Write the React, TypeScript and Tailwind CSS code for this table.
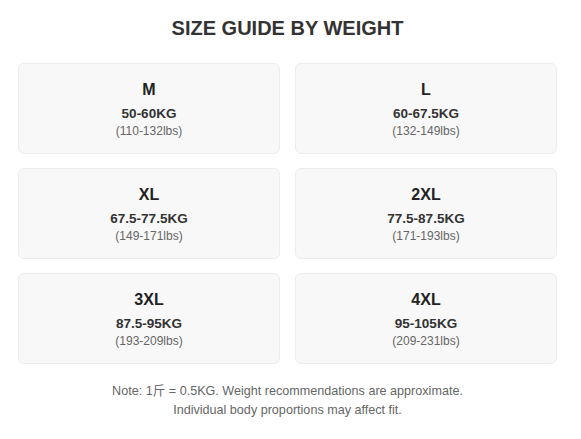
const SIZES = [
  { size: 'M', kg: '50-60KG', lbs: '(110-132lbs)' },
  { size: 'L', kg: '60-67.5KG', lbs: '(132-149lbs)' },
  { size: 'XL', kg: '67.5-77.5KG', lbs: '(149-171lbs)' },
  { size: '2XL', kg: '77.5-87.5KG', lbs: '(171-193lbs)' },
  { size: '3XL', kg: '87.5-95KG', lbs: '(193-209lbs)' },
  { size: '4XL', kg: '95-105KG', lbs: '(209-231lbs)' },
]

function SizeCard({ size, kg, lbs }: { size: string; kg: string; lbs: string }) {
  return (
    <div className="h-[91px] rounded-md border border-[#ececec] bg-[#f8f8f8] flex flex-col items-center pt-[15px]">
      <div className="text-[16px] leading-[22px] font-bold text-[#222]">{size}</div>
      <div className="mt-[4px] text-[13.5px] leading-[17px] font-bold text-[#333]">{kg}</div>
      <div className="mt-[1px] text-[12px] leading-[16px] text-[#666]">{lbs}</div>
    </div>
  )
}

export default function App() {
  return (
    <div className="w-[581px] h-[439px] bg-white pl-[18px] pr-[24px] font-['Liberation_Sans','Noto_Sans_CJK_SC',sans-serif]">
      <h2 className="pt-[15px] text-center text-[20px] leading-[26px] font-bold text-[#333]">
        SIZE GUIDE BY WEIGHT
      </h2>

      <div className="mt-[22px] grid grid-cols-2 gap-x-[15px] gap-y-[14px]">
        {SIZES.map(s => <SizeCard key={s.size} {...s} />)}
      </div>

      <p className="mt-[18px] text-center text-[12.6px] leading-[19px] text-[#666]">
        Note: 1斤 = 0.5KG. Weight recommendations are approximate.
        <br />
        Individual body proportions may affect fit.
      </p>
    </div>
  )
}
